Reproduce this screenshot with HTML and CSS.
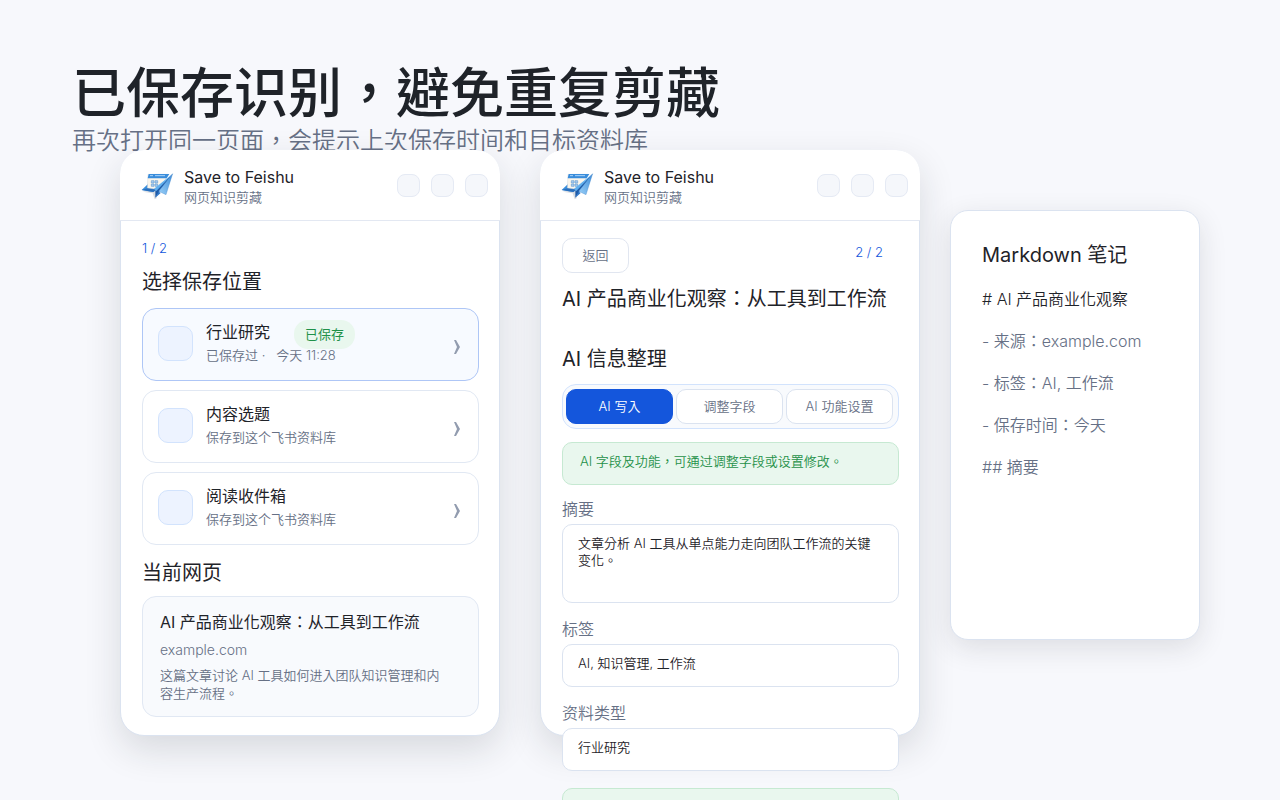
FILE: index.html
```
<!DOCTYPE html>
<html lang="zh-Hant">
<head>
  <meta charset="UTF-8">
  <meta name="viewport" content="width=device-width, initial-scale=1">
  <title>Save to Feishu</title>
  <link rel="stylesheet" href="styles.css">
</head>
<body>
  <svg width="0" height="0" class="defs" aria-hidden="true">
    <linearGradient id="wing" x1="1" y1="0" x2="0" y2="1">
      <stop offset="0" stop-color="#3c8cd8"/>
      <stop offset="1" stop-color="#9bd0f8"/>
    </linearGradient>
    <symbol id="logo" viewBox="0 0 102 84">
      <path d="M8 59l40-6 2 26-6 3-6-18z" fill="#9aa5b4" opacity=".4"/>
      <path d="M5 54l19-18 34 12-18 12z" fill="#3b8edb"/>
      <path d="M5 54l35 6 10-8-24-4z" fill="#2a6fbd"/>
      <path d="M24 7h60l-24 46-38-5z" fill="#fbf6ec" stroke="#c3c9d0"/>
      <path d="M26 6h62l-8 13H23z" fill="#3a8ddb"/>
      <path d="M30 11h9M45 11h30" stroke="#a9d4f8" stroke-width="3"/>
      <path d="M34 26h8v7h-8zM45 26h8v7h-8zM34 36h8v7h-8zM45 36h8v7h-8z" fill="#a9cdf0" stroke="#6ba0d2" stroke-width="2"/>
      <path d="M98 5L46 57v20l12-17z" fill="#1f5ba8"/>
      <path d="M98 5L42 50l7 7z" fill="#61b0ef"/>
      <path d="M98 5L56 58l22 10z" fill="url(#wing)" stroke="#3f84c8" stroke-width="1"/>
      <path d="M46 77l10-18 6 4z" fill="#2b76c9"/>
    </symbol>
    <symbol id="chevron" viewBox="0 0 6 14">
      <path d="M0 0h2l4 7-4 7H0l3-7z"/>
    </symbol>
  </svg>

  <header class="hero">
    <h1>已保存识别，避免重复剪藏</h1>
    <p>再次打开同一页面，会提示上次保存时间和目标资料库</p>
  </header>

  <main class="stage">
    <div class="panels">
      <section class="panel">
        <div class="panel-head">
          <svg class="logo" aria-hidden="true"><use href="#logo"/></svg>
          <div class="brand">
            <strong>Save to Feishu</strong>
            <span>网页知识剪藏</span>
          </div>
          <div class="tools">
            <button type="button"></button>
            <button type="button"></button>
            <button type="button"></button>
          </div>
        </div>
        <div class="panel-body">
          <p class="step">1 / 2</p>
          <h2>选择保存位置</h2>
          <div class="targets">
            <button type="button" class="target active">
              <span class="target-icon"></span>
              <span class="target-text">
                <span class="target-name">行业研究 <span class="badge">已保存</span></span>
                <span class="target-note">已保存过 ·&nbsp; &nbsp;今天 11:28</span>
              </span>
              <svg class="chevron" aria-hidden="true"><use href="#chevron"/></svg>
            </button>
            <button type="button" class="target">
              <span class="target-icon"></span>
              <span class="target-text">
                <span class="target-name">内容选题</span>
                <span class="target-note">保存到这个飞书资料库</span>
              </span>
              <svg class="chevron" aria-hidden="true"><use href="#chevron"/></svg>
            </button>
            <button type="button" class="target">
              <span class="target-icon"></span>
              <span class="target-text">
                <span class="target-name">阅读收件箱</span>
                <span class="target-note">保存到这个飞书资料库</span>
              </span>
              <svg class="chevron" aria-hidden="true"><use href="#chevron"/></svg>
            </button>
          </div>
          <h2>当前网页</h2>
          <article class="page-card">
            <h3>AI 产品商业化观察：从工具到工作流</h3>
            <p class="domain">example.com</p>
            <p>这篇文章讨论 AI 工具如何进入团队知识管理和内容生产流程。</p>
          </article>
        </div>
      </section>

      <section class="panel">
        <div class="panel-head">
          <svg class="logo" aria-hidden="true"><use href="#logo"/></svg>
          <div class="brand">
            <strong>Save to Feishu</strong>
            <span>网页知识剪藏</span>
          </div>
          <div class="tools">
            <button type="button"></button>
            <button type="button"></button>
            <button type="button"></button>
          </div>
        </div>
        <form class="panel-body panel-form">
          <div class="form-top">
            <button type="button" class="back">返回</button>
            <span class="step">2 / 2</span>
          </div>
          <h2 class="page-title">AI 产品商业化观察：从工具到工作流</h2>
          <h2>AI 信息整理</h2>
          <div class="tabs">
            <button type="button" class="selected">AI 写入</button>
            <button type="button">调整字段</button>
            <button type="button">AI 功能设置</button>
          </div>
          <p class="notice">AI 字段及功能，可通过调整字段或设置修改。</p>
          <label for="summary">摘要</label>
          <textarea id="summary">文章分析 AI 工具从单点能力走向团队工作流的关键变化。</textarea>
          <label for="tags">标签</label>
          <input id="tags" type="text" value="AI, 知识管理, 工作流">
          <label for="kind">资料类型</label>
          <input id="kind" type="text" value="行业研究">
          <p class="notice"></p>
        </form>
      </section>
    </div>

    <aside class="note">
      <h2>Markdown 笔记</h2>
      <p class="note-title"># AI 产品商业化观察</p>
      <p>- 来源：example.com</p>
      <p>- 标签：AI, 工作流</p>
      <p>- 保存时间：今天</p>
      <p>## 摘要</p>
    </aside>
  </main>
</body>
</html>
```
FILE: styles.css
```
* {
  box-sizing: border-box;
}
html {
  height: 100%;
  overflow: hidden;
}
body {
  height: 100%;
  margin: 0;
  overflow: hidden;
  background: #f7f8fc;
  color: #1f2329;
  font-family: Inter, "Noto Sans CJK TC", sans-serif;
  font-size: 13px;
  font-weight: 350;
  line-height: 18px;
}
h1, h2, h3, p {
  margin: 0;
  font-weight: 400;
}
p {
  font-weight: 350;
}
button, input, textarea {
  font: inherit;
  color: inherit;
}
button {
  padding: 0;
  cursor: pointer;
}
.defs {
  display: block;
}
.hero {
  height: 150px;
  padding: 62px 72px 0;
}
.hero h1 {
  font-size: 54px;
  font-weight: 500;
  line-height: 64px;
}
.hero p {
  color: #667085;
  font-size: 24px;
  line-height: 30px;
}
.stage {
  position: relative;
  display: grid;
  grid-template-columns: 80fr 25fr;
  align-items: start;
  gap: 30px;
  padding: 0 80px 0 120px;
}
.panels {
  display: grid;
  grid-template-columns: 1fr 1fr;
  gap: 40px;
}
.panel {
  min-width: 0;
  background: #fff;
  border: 1px solid #dbe3f0;
  border-radius: 24px;
  box-shadow: 0 14px 36px rgba(31, 35, 41, 0.14);
}
.panel-head {
  display: flex;
  align-items: center;
  height: 71px;
  margin: -1px -1px 0;
  padding: 1px 12px 0 20px;
  background: #fff;
  border-bottom: 1px solid #e3e8f2;
  border-radius: 24px 24px 0 0;
}
.logo {
  width: 34px;
  height: 28px;
}
.brand {
  flex: 1;
  margin-left: 10px;
  padding-top: 3px;
}
.brand strong, .brand span {
  display: block;
}
.brand strong {
  font-size: 16px;
  font-weight: 400;
  line-height: 20px;
}
.brand span {
  color: #667085;
  line-height: 20px;
}
.tools {
  display: flex;
  gap: 11px;
}
.tools button {
  width: 23px;
  height: 23px;
  background: #f5f7fb;
  border: 1px solid #e5eaf4;
  border-radius: 8px;
}
.panel-body {
  padding: 17px 20px 18px 21px;
}
.panel-body h2 {
  font-size: 20px;
  line-height: 28px;
}
.step {
  color: #1456dc;
  line-height: 20px;
}
.step + h2 {
  margin-top: 10px;
}
.targets {
  display: grid;
  gap: 9px;
  margin: 12px 0 14px;
}
.target {
  display: flex;
  align-items: flex-start;
  height: 73px;
  padding: 11px 18px 0 15px;
  background: #fff;
  border: 1px solid #e1e8f3;
  border-radius: 14px;
  text-align: left;
}
.target.active {
  background: #f7faff;
  border-color: #aec6f6;
}
.target-icon {
  width: 35px;
  height: 35px;
  margin-top: 6px;
  background: #edf3ff;
  border: 1px solid #d2e3fd;
  border-radius: 10px;
}
.target-text {
  flex: 1;
  margin-left: 13px;
}
.target-name {
  display: flex;
  align-items: flex-start;
  gap: 24px;
  height: 24px;
  font-size: 16px;
  font-weight: 400;
  line-height: 24px;
}
.badge {
  padding: 5px 11px 6px;
  background: #e9f7ee;
  border-radius: 14px;
  color: #1f9149;
  font-size: 13px;
  line-height: 18px;
}
.target-note {
  position: relative;
  display: block;
  color: #667085;
  line-height: 22px;
}
.chevron {
  width: 6px;
  height: 14px;
  margin-top: 20px;
  fill: #929caf;
}
.page-card {
  margin-top: 9px;
  padding: 13px 30px 14px 17px;
  background: #f8fafd;
  border: 1px solid #e1e8f3;
  border-radius: 14px;
  color: #667085;
}
.page-card h3 {
  color: #1f2329;
  font-size: 16px;
  line-height: 24px;
  white-space: nowrap;
}
.page-card .domain {
  margin: 7px 0;
  font-size: 14px;
}

/* the form is longer than the panel and runs out below it */
.panel-form {
  height: 0;
}
.form-top {
  display: flex;
  align-items: flex-start;
  justify-content: space-between;
  padding-right: 16px;
}
.form-top .step {
  margin-top: 4px;
}
.back {
  width: 67px;
  height: 35px;
  padding-bottom: 2px;
  background: #fff;
  border: 1px solid #e1e6f0;
  border-radius: 10px;
  color: #667085;
}
.panel-body .page-title {
  margin: 12px 0 32px;
  white-space: nowrap;
}
.tabs {
  display: grid;
  grid-template-columns: 1fr 1fr 1fr;
  gap: 3px;
  margin: 11px 0 13px;
  padding: 4px 5px 4px 3px;
  background: #f8fafd;
  border: 1px solid #d2e3fd;
  border-radius: 14px;
}
.tabs button {
  height: 35px;
  padding-bottom: 2px;
  background: #fff;
  border: 1px solid #dbe3f0;
  border-radius: 10px;
  color: #667085;
}
.tabs .selected {
  background: #1456dc;
  border-color: #1456dc;
  color: #fff;
}
.notice {
  height: 43px;
  padding: 9px 17px;
  background: #e9f7ee;
  border: 1px solid #c6e9d2;
  border-radius: 10px;
  color: #1f9149;
}
.panel-form label {
  display: block;
  margin: 12px 0 3px;
  color: #667085;
  font-size: 16px;
  line-height: 24px;
}
.panel-form input, .panel-form textarea {
  display: block;
  width: 100%;
  height: 43px;
  padding: 0 15px 6px;
  background: #fff;
  border: 1px solid #dbe3f0;
  border-radius: 10px;
  outline: none;
}
.panel-form textarea {
  height: 79px;
  margin-bottom: 14px;
  padding: 10px 20px 0 15px;
  line-height: 17px;
  resize: none;
}
.panel-form label + input {
  margin-bottom: 14px;
}
.panel-form input + .notice {
  margin-top: 17px;
}
.note {
  min-height: 430px;
  margin-top: 60px;
  padding: 30px 20px 30px 31px;
  background: #fff;
  border: 1px solid #dbe3f0;
  border-radius: 18px;
  box-shadow: 0 8px 28px rgba(31, 35, 41, 0.12);
  color: #667085;
  font-size: 16px;
  line-height: 24px;
  white-space: nowrap;
}
.note h2 {
  color: #1f2329;
  font-size: 20px;
  line-height: 28px;
}
.note p {
  margin-top: 18px;
}
.note .note-title {
  color: #1f2329;
}
```
